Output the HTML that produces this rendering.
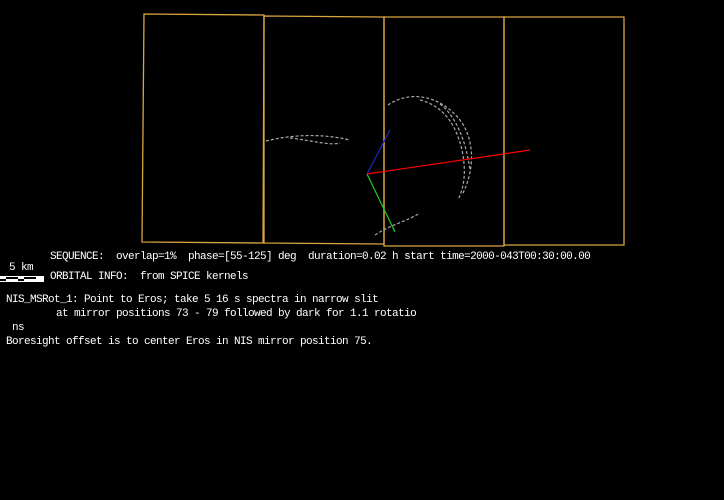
<!DOCTYPE html>
<html><head><style>
html,body{margin:0;padding:0;background:#000;width:724px;height:500px;overflow:hidden}
.t{position:absolute;font-family:"Liberation Mono",monospace;font-size:11px;letter-spacing:-0.6px;color:#fff;white-space:pre;line-height:12px}
</style></head><body>
<svg width="724" height="500" style="position:absolute;left:0;top:0">
<g fill="none" stroke="#d9a640" stroke-width="1.3">
<polygon points="144,14 264,15 263,243 142,242"/>
<polygon points="264,16 384,17 384,244 264,243"/>
<polygon points="384,17 504,17 504,246 384,246"/>
<polygon points="504,17 624,17 624,245 504,245"/>
</g>
<g fill="none" stroke="#aaa" stroke-width="1.2" stroke-dasharray="3,2">
<path d="M266,141 C290,135 320,133 350,140"/>
<path d="M290,138 C310,140 330,146 340,143"/>
<path d="M388,105 C410,90 440,95 460,120 C475,140 475,170 462,195"/>
<path d="M420,100 C440,105 455,120 462,150 C466,170 465,185 458,200"/>
<path d="M440,104 C455,115 466,140 470,170"/>
<path d="M375,235 C390,225 405,222 420,213"/>
</g>
<line x1="367" y1="174" x2="530" y2="150" stroke="#f00" stroke-width="1.2"/>
<line x1="367" y1="174" x2="390" y2="130" stroke="#22c" stroke-width="1.2"/>
<line x1="367" y1="174" x2="395" y2="232" stroke="#2c2" stroke-width="1.2"/>
<rect x="0" y="276" width="44" height="6" fill="#fff"/>
<g fill="#000"><rect x="6" y="277" width="6" height="2"/><rect x="18" y="279" width="6" height="2"/><rect x="30" y="277" width="6" height="2"/><rect x="0" y="279" width="6" height="2"/><rect x="12" y="277" width="6" height="2"/><rect x="24" y="277" width="6" height="2"/></g>
</svg>
<div class="t" style="left:50px;top:251px">SEQUENCE:  overlap=1%  phase=[55-125] deg  duration=0.02 h start time=2000-043T00:30:00.00</div>
<div class="t" style="left:9px;top:262px">5 km</div>
<div class="t" style="left:50px;top:271px">ORBITAL INFO:  from SPICE kernels</div>
<div class="t" style="left:6px;top:294px">NIS_MSRot_1: Point to Eros; take 5 16 s spectra in narrow slit</div>
<div class="t" style="left:56px;top:308px">at mirror positions 73 - 79 followed by dark for 1.1 rotatio</div>
<div class="t" style="left:12px;top:322px">ns</div>
<div class="t" style="left:6px;top:336px">Boresight offset is to center Eros in NIS mirror position 75.</div>
</body></html>
